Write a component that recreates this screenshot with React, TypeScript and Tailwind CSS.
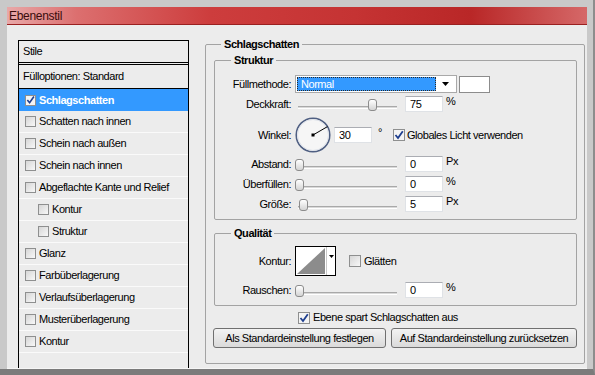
import React from "react"

const stile = [
  { label: "Schatten nach innen" },
  { label: "Schein nach außen" },
  { label: "Schein nach innen" },
  { label: "Abgeflachte Kante und Relief" },
  { label: "Kontur", sub: true },
  { label: "Struktur", sub: true },
  { label: "Glanz" },
  { label: "Farbüberlagerung" },
  { label: "Verlaufsüberlagerung" },
  { label: "Musterüberlagerung" },
  { label: "Kontur" },
]

function Box({ checked, big }: { checked?: boolean; big?: boolean }) {
  return (
    <span
      className={`${big ? "w-[12px] h-[12px]" : "w-[11px] h-[11px]"} shrink-0 border border-[#8e8f8f] flex items-center justify-center ${
        checked ? "bg-[#f4f4f4]" : "bg-gradient-to-br from-[#d6d6d6] to-[#f8f8f8]"
      }`}
    >
      {checked && (
        <svg width="10" height="10" viewBox="0 0 10 10">
          <path d="M1.5 5 L4 8 L8.8 1.2" fill="none" stroke="#1f3f8f" strokeWidth="1.8" />
        </svg>
      )}
    </span>
  )
}

function Slider({ pos }: { pos: number }) {
  return (
    <div className="relative w-[105px] h-[16px]">
      <div className="absolute left-[3px] right-[3px] top-[10px] h-[3px] bg-[#d9d9d9] border-t border-[#a9a9a9] border-b border-b-white" />
      <div
        className="absolute top-[3px] w-[9px] h-[12px] rounded-[3px] border border-[#8c8c8c] bg-gradient-to-b from-white to-[#d4d4d4]"
        style={{ left: pos }}
      />
    </div>
  )
}

function Num({ v }: { v: string }) {
  return (
    <div className="w-[38px] h-[16px] bg-white border border-[#dfe2e6] border-t-[#abadb3] pl-[4px] leading-[14px]">
      {v}
    </div>
  )
}

function Row({ label, className, children }: { label: string; className: string; children: React.ReactNode }) {
  return (
    <div className={`flex items-center ${className}`}>
      <span className="w-[76px] text-right">{label}</span>
      <div className="ml-[4px] flex items-center">{children}</div>
    </div>
  )
}

function SliderRow({ label, pos, v, unit, className }: { label: string; pos: number; v: string; unit: string; className: string }) {
  return (
    <Row label={label} className={`h-[16px] ${className}`}>
      <Slider pos={pos} />
      <div className="ml-[5px]">
        <Num v={v} />
      </div>
      <span className="ml-[3px] self-start -mt-[1px] leading-[12px]">{unit}</span>
    </Row>
  )
}

export default function App() {
  return (
    <div className="w-[595px] h-[375px] bg-[#c9c9c9] pt-[7px] pl-[7px] pr-[6px] border-r-[2px] border-r-[#8d8d8d] border-b-[6px] border-b-[#7b7b7b] flex flex-col font-['Liberation_Sans',Arial,sans-serif] text-[11px] tracking-[-0.45px] text-black">
      <div className="h-[18px] shrink-0 border-b border-[#9a2020] bg-[linear-gradient(90deg,#e8a8a8_0%,#dc6f6f_12%,#cd3d3d_35%,#c53333_60%,#b92727_80%,#d56868_100%)] pl-[2px] flex items-center text-[12px] tracking-[-0.3px] text-[#3a0c0c]">
        Ebenenstil
      </div>

      <div className="flex-1 bg-[#ececec] border-b border-[#f6f6f6] flex items-start">
        {/* Stile list */}
        <div className="mt-[15px] ml-[11px] w-[171px] self-stretch border-x border-t border-black flex flex-col">
          <div className="h-[22px] border-b border-black flex items-center pl-[4px]">Stile</div>
          <div className="mt-[1px] h-[25px] border-y border-black flex items-center pl-[4px]">Fülloptionen: Standard</div>
          <div className="h-[22px] bg-[#3399ff] flex items-center pl-[6px] gap-[3px] text-white font-bold">
            <Box checked />
            <span>Schlagschatten</span>
          </div>
          {stile.map((s, i) => (
            <div
              key={i}
              className={`h-[22px] border-b border-[#fafafa] flex items-center gap-[3px] ${s.sub ? "pl-[19px]" : "pl-[6px]"}`}
            >
              <Box />
              <span>{s.label}</span>
            </div>
          ))}
        </div>

        {/* Schlagschatten */}
        <fieldset className="mt-[12px] ml-[16px] w-[380px] h-[327px] border border-[#a3a3a3] rounded-[2px] pl-[8px] pr-[7px] min-w-0">
          <legend className="ml-[7px] px-[3px] font-bold leading-[14px]">Schlagschatten</legend>

          <fieldset className="mt-[2px] border border-[#a3a3a3] rounded-[2px] pb-[7px] min-w-0">
            <legend className="ml-[16px] px-[3px] font-bold leading-[14px]">Struktur</legend>

            <Row label="Füllmethode:" className="mt-[8px] h-[18px]">
              <div className="w-[162px] h-[18px] bg-white border border-[#a9a9a9] p-[1px] flex">
                <div className="flex-1 bg-[#3399ff] border border-dotted border-[#2a2a2a] text-white leading-[13px] pl-[3px]">
                  Normal
                </div>
                <div className="w-[19px] flex items-center justify-center">
                  <svg width="7" height="4" viewBox="0 0 7 4">
                    <path d="M0 0 H7 L3.5 4 Z" fill="#000" />
                  </svg>
                </div>
              </div>
              <div className="ml-[2px] w-[31px] h-[17px] bg-white border border-[#8c8c8c]" />
            </Row>

            <SliderRow label="Deckkraft:" pos={73} v="75" unit="%" className="mt-[3px]" />

            <Row label="Winkel:" className="mt-[5px] h-[36px]">
              <svg width="36" height="36" viewBox="0 0 36 36">
                <circle cx="18" cy="18" r="16.8" fill="#f6f6f6" stroke="#4f5f82" strokeWidth="1.5" />
                <circle cx="18" cy="18" r="15.5" fill="none" stroke="#d8dde6" strokeWidth="0.8" />
                <line x1="18" y1="18" x2="32.5" y2="9.6" stroke="#000" strokeWidth="1" />
                <rect x="16.5" y="16.5" width="3" height="3" fill="#000" />
              </svg>
              <div className="ml-[3px]">
                <Num v="30" />
              </div>
              <span className="ml-[6px] w-[15px] self-start mt-[9px] leading-[12px]">°</span>
              <Box checked big />
              <span className="ml-[2px]">Globales Licht verwenden</span>
            </Row>

            <SliderRow label="Abstand:" pos={0} v="0" unit="Px" className="mt-[3px]" />
            <SliderRow label="Überfüllen:" pos={0} v="0" unit="%" className="mt-[4px]" />
            <SliderRow label="Größe:" pos={4} v="5" unit="Px" className="mt-[4px]" />
          </fieldset>

          <fieldset className="mt-[6px] border border-[#a3a3a3] rounded-[2px] pb-[7px] min-w-0">
            <legend className="ml-[16px] px-[3px] font-bold leading-[14px]">Qualität</legend>

            <Row label="Kontur:" className="mt-[6px] h-[30px]">
              <div className="w-[41px] h-[30px] border border-black bg-white flex">
                <svg width="30" height="28" viewBox="0 0 30 28">
                  <path d="M1 27 L29 1 L29 27 Z" fill="#8c8c8c" />
                </svg>
                <div className="flex-1 border-l border-[#c8c8c8] flex justify-center pt-[8px]">
                  <svg width="5" height="3" viewBox="0 0 5 3">
                    <path d="M0 0 H5 L2.5 3 Z" fill="#000" />
                  </svg>
                </div>
              </div>
              <div className="ml-[13px]">
                <Box big />
              </div>
              <span className="ml-[3px]">Glätten</span>
            </Row>

            <SliderRow label="Rauschen:" pos={0} v="0" unit="%" className="mt-[6px]" />
          </fieldset>

          <div className="mt-[5px] h-[13px] pl-[84px] flex items-center gap-[3px]">
            <Box checked big />
            <span>Ebene spart Schlagschatten aus</span>
          </div>

          <div className="mt-[4px] -ml-[1px] flex gap-[5px]">
            <button className="w-[174px] h-[20px] rounded-[3px] border border-[#707070] bg-gradient-to-b from-[#f3f3f3] to-[#dadada] text-[11px] tracking-[-0.45px]">
              Als Standardeinstellung festlegen
            </button>
            <button className="w-[187px] h-[20px] rounded-[3px] border border-[#707070] bg-gradient-to-b from-[#f3f3f3] to-[#dadada] text-[11px] tracking-[-0.45px]">
              Auf Standardeinstellung zurücksetzen
            </button>
          </div>
        </fieldset>
      </div>
    </div>
  )
}
